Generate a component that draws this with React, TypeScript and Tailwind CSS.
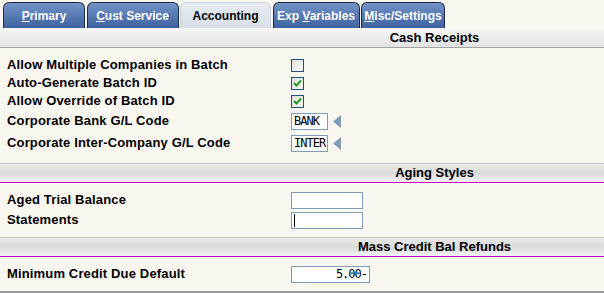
import React from "react";

const tabs = [
  { pre: "", key: "P", post: "rimary", w: "w-[82px]", active: false },
  { pre: "", key: "C", post: "ust Service", w: "w-[92px]", active: false },
  { pre: "Accounting", key: "", post: "", w: "w-[91px]", active: true },
  { pre: "Exp\u00a0", key: "V", post: "ariables", w: "w-[87px]", active: false },
  { pre: "", key: "M", post: "isc/Settings", w: "w-[84px]", active: false },
];

function Check({ on }: { on: boolean }) {
  return (
    <div className="w-[13px] h-[13px] border border-[#1c5180] bg-gradient-to-br from-[#dcdcd7] to-white flex items-center justify-center">
      {on && (
        <svg width="9" height="9" viewBox="0 0 9 9">
          <path d="M1 4 L3.5 6.5 L8 1.5" stroke="#21a121" strokeWidth="2" fill="none" />
        </svg>
      )}
    </div>
  );
}

function Arrow() {
  return (
    <svg width="9" height="13" viewBox="0 0 9 13" className="ml-[5px]">
      <polygon points="8,0 8,13 0,6.5" fill="#7f9db9" />
    </svg>
  );
}

function Box({ w, value, right, cursor }: { w: string; value?: string; right?: boolean; cursor?: boolean }) {
  return (
    <div className={`${w} h-[17px] border border-[#7f9db9] bg-white flex items-center px-[2px] font-['DejaVu_Sans_Mono',monospace] text-[12px] tracking-[-1px] text-black ${right ? "justify-end" : ""}`}>
      {cursor && <div className="w-px h-[13px] bg-black" />}
      {value}
    </div>
  );
}

function Row({ label, h, children }: { label: string; h: string; children: React.ReactNode }) {
  return (
    <div className={`flex items-center ${h}`}>
      <div className="w-[291px] pl-[7px] font-bold text-[13px] tracking-[0.15px] text-black">{label}</div>
      <div className="flex items-center">{children}</div>
    </div>
  );
}

function Header({ title }: { title: string }) {
  return (
    <div className="border-t border-[#c6c6c6] border-b border-b-[#cc00cc]">
      <div className="h-[18px] flex items-center bg-gradient-to-b from-[#ececec] via-[#d9d9d9] to-[#f3f3f3]">
        <div className="w-[265px]" />
        <div className="flex-1 text-center font-bold text-[13px] text-black">{title}</div>
      </div>
    </div>
  );
}

export default function App() {
  return (
    <div className="w-[604px] h-[293px] overflow-hidden bg-[#faf6f0] font-['Liberation_Sans',Arial,sans-serif]">
      <div className="h-[28px] flex items-end pl-[3px]">
        {tabs.map((t, i) => (
          <div
            key={i}
            className={`${t.w} h-[26px] mr-[1.5px] rounded-t-[6px] flex items-center justify-center text-[12px] font-bold ${
              t.active
                ? "bg-gradient-to-b from-[#e6ebf1] to-[#d8dfe8] text-black border border-b-0 border-[#c9d2de]"
                : "bg-gradient-to-b from-[#7393c7] to-[#3e62a0] text-white border border-b-0 border-[#1f2c46]"
            }`}
          >
            <span>
              {t.pre}
              {t.key && <span className="underline">{t.key}</span>}
              {t.post}
            </span>
          </div>
        ))}
      </div>
      <div className="h-[20px] flex items-center border-b border-[#a3a3a3] bg-gradient-to-b from-[#f6f6f6] to-[#e3e3e3]">
        <div className="w-[265px]" />
        <div className="flex-1 text-center font-bold text-[13px] text-black">Cash Receipts</div>
      </div>
      <div className="pt-[8px] pb-[9px]">
        <Row label="Allow Multiple Companies in Batch" h="h-[18px]"><Check on={false} /></Row>
        <Row label="Auto-Generate Batch ID" h="h-[18px]"><Check on /></Row>
        <Row label="Allow Override of Batch ID" h="h-[18px]"><Check on /></Row>
        <Row label="Corporate Bank G/L Code" h="h-[22px]"><Box w="w-[37px]" value="BANK" /><Arrow /></Row>
        <Row label="Corporate Inter-Company G/L Code" h="h-[22px]"><Box w="w-[37px]" value="INTER" /><Arrow /></Row>
      </div>
      <Header title="Aging Styles" />
      <div className="pt-[7px] pb-[7px]">
        <Row label="Aged Trial Balance" h="h-[20px]"><Box w="w-[72px]" /></Row>
        <Row label="Statements" h="h-[20px]"><Box w="w-[72px]" cursor /></Row>
      </div>
      <Header title="Mass Credit Bal Refunds" />
      <div className="pt-[6px] pb-[6px] border-b-2 border-[#9a9a9a]">
        <Row label="Minimum Credit Due Default" h="h-[22px]"><Box w="w-[79px]" value="5.00-" right /></Row>
      </div>
    </div>
  );
}
